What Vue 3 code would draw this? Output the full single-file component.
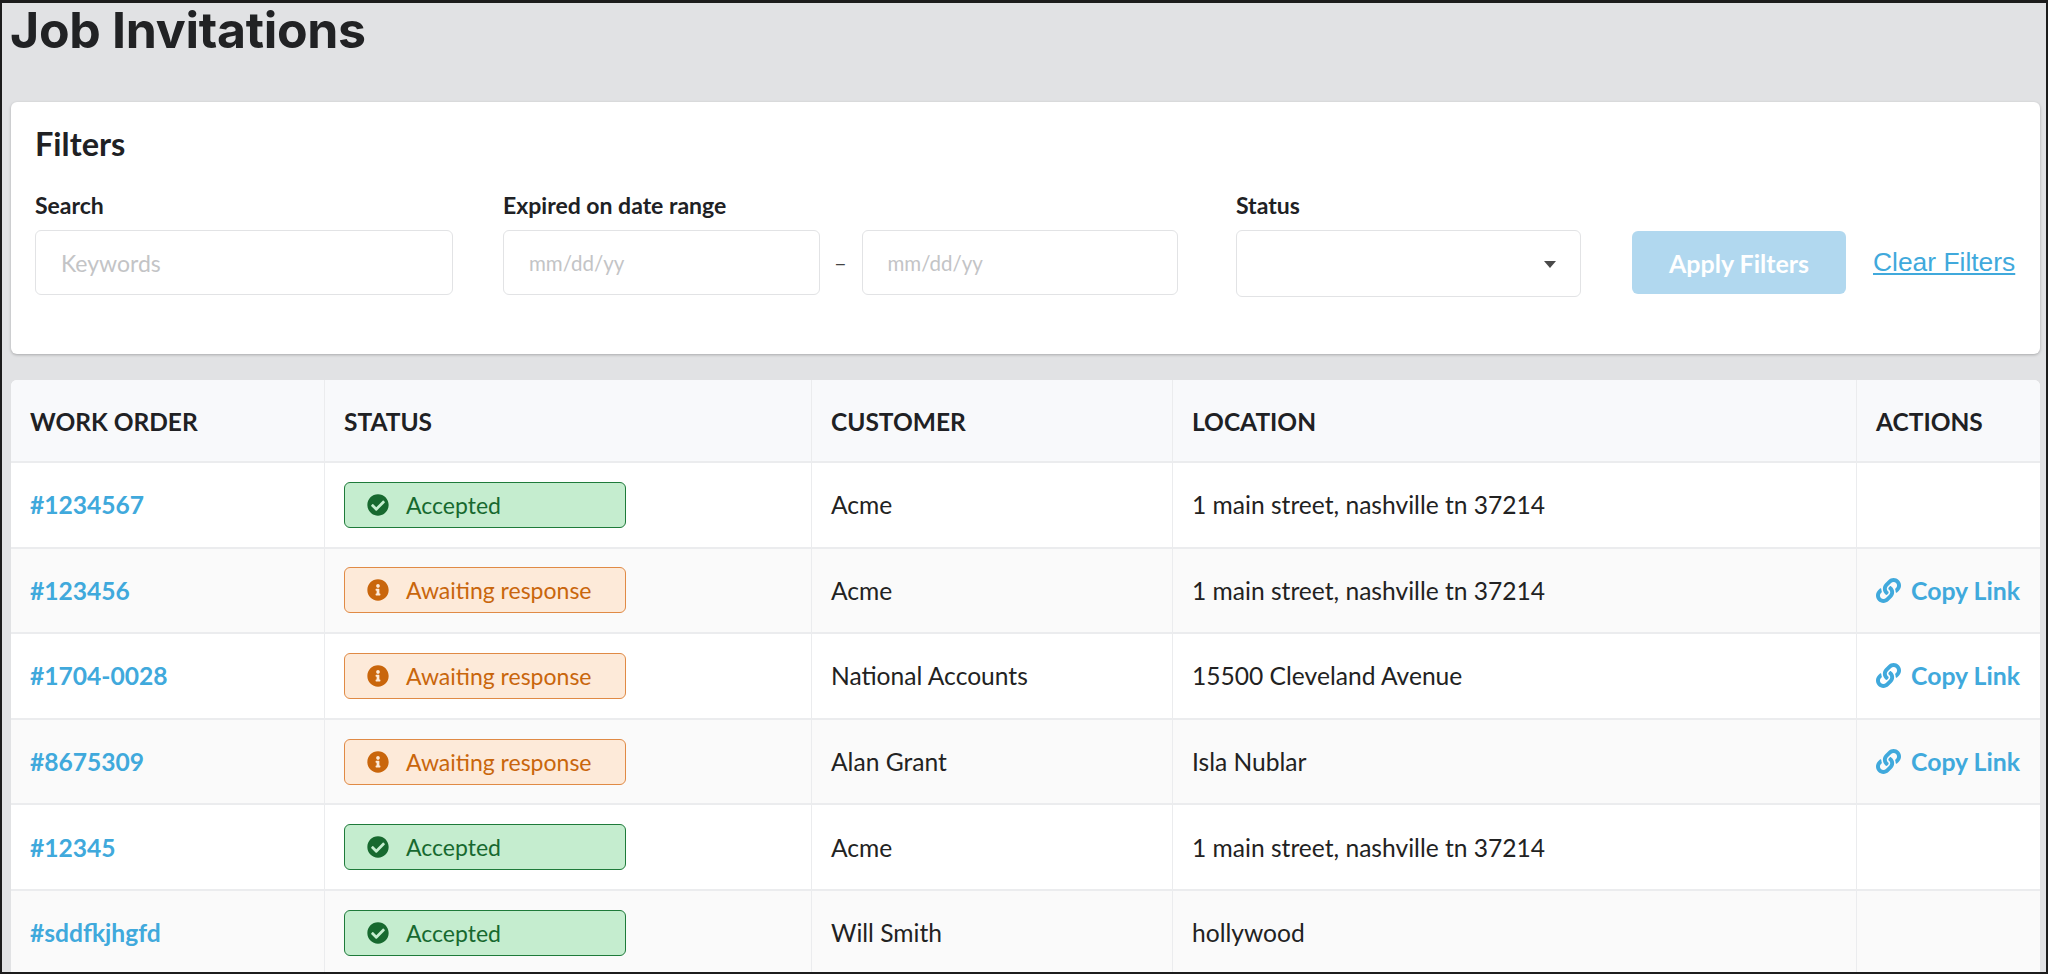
<script setup>
const check = 'M504 256c0 136.967-111.033 248-248 248S8 392.967 8 256 119.033 8 256 8s248 111.033 248 248zM227.314 387.314l184-184c6.248-6.248 6.248-16.379 0-22.627l-22.627-22.627c-6.248-6.249-16.379-6.249-22.628 0L216 308.118l-70.059-70.059c-6.248-6.248-16.379-6.248-22.628 0l-22.627 22.627c-6.248 6.248-6.248 16.379 0 22.627l104 104c6.249 6.249 16.379 6.249 22.628.001z'
const info = 'M256 8C119.043 8 8 119.083 8 256c0 136.997 111.043 248 248 248s248-111.003 248-248C504 119.083 392.957 8 256 8zm0 110c23.196 0 42 18.804 42 42s-18.804 42-42 42-42-18.804-42-42 18.804-42 42-42zm56 254c0 6.627-5.373 12-12 12h-88c-6.627 0-12-5.373-12-12v-24c0-6.627 5.373-12 12-12h12v-64h-12c-6.627 0-12-5.373-12-12v-24c0-6.627 5.373-12 12-12h64c6.627 0 12 5.373 12 12v100h12c6.627 0 12 5.373 12 12v24z'
const link = 'M326.612 185.391c59.747 59.809 58.927 155.698.36 214.59-.11.12-.24.25-.36.37l-67.2 67.2c-59.27 59.27-155.699 59.262-214.96 0-59.27-59.26-59.27-155.7 0-214.96l37.106-37.106c9.84-9.84 26.786-3.3 27.294 10.606.648 17.722 3.826 35.527 9.69 52.721 1.986 5.822.567 12.262-3.783 16.612l-13.087 13.087c-28.026 28.026-28.905 73.66-1.155 101.96 28.024 28.579 74.086 28.749 102.325.51l67.2-67.19c28.191-28.191 28.073-73.757 0-101.83-3.701-3.694-7.429-6.564-10.341-8.569a16.037 16.037 0 0 1-6.947-12.606c-.396-10.567 3.348-21.456 11.698-29.806l21.054-21.055c5.521-5.521 14.182-6.199 20.584-1.731a152.482 152.482 0 0 1 20.522 17.197zM467.547 44.449c-59.261-59.262-155.69-59.27-214.96 0l-67.2 67.2c-.12.12-.25.25-.36.37-58.566 58.892-59.387 154.781.36 214.59a152.454 152.454 0 0 0 20.521 17.196c6.402 4.468 15.064 3.789 20.584-1.731l21.054-21.055c8.35-8.35 12.094-19.239 11.698-29.806a16.037 16.037 0 0 0-6.947-12.606c-2.912-2.005-6.64-4.875-10.341-8.569-28.073-28.073-28.191-73.639 0-101.83l67.2-67.19c28.239-28.239 74.3-28.069 102.325.51 27.75 28.3 26.872 73.934-1.155 101.96l-13.087 13.087c-4.35 4.35-5.769 10.79-3.783 16.612 5.864 17.194 9.042 34.999 9.69 52.721.509 13.906 17.454 20.446 27.294 10.606l37.106-37.106c59.271-59.259 59.271-155.699.001-214.959z'

const rows = [
  { id: '#1234567', accepted: true, customer: 'Acme', location: '1 main street, nashville tn 37214' },
  { id: '#123456', accepted: false, customer: 'Acme', location: '1 main street, nashville tn 37214' },
  { id: '#1704-0028', accepted: false, customer: 'National Accounts', location: '15500 Cleveland Avenue' },
  { id: '#8675309', accepted: false, customer: 'Alan Grant', location: 'Isla Nublar' },
  { id: '#12345', accepted: true, customer: 'Acme', location: '1 main street, nashville tn 37214' },
  { id: '#sddfkjhgfd', accepted: true, customer: 'Will Smith', location: 'hollywood' }
]
</script>

<template>
  <div class="frame">
    <h1 class="title">Job Invitations</h1>

    <section class="card">
      <h2 class="card-title">Filters</h2>
      <div class="filters">
        <div class="field search">
          <label class="label">Search</label>
          <input class="input keywords" placeholder="Keywords" />
        </div>
        <div class="field range">
          <label class="label">Expired on date range</label>
          <div class="range-row">
            <input class="input date" placeholder="mm/dd/yy" />
            <span class="dash">–</span>
            <input class="input date" placeholder="mm/dd/yy" />
          </div>
        </div>
        <div class="field status">
          <label class="label">Status</label>
          <div class="select"><span class="caret"></span></div>
        </div>
        <button class="apply">Apply Filters</button>
        <a class="clear">Clear Filters</a>
      </div>
    </section>

    <table class="table">
      <colgroup>
        <col class="c1" /><col class="c2" /><col class="c3" /><col class="c4" /><col class="c5" />
      </colgroup>
      <thead>
        <tr>
          <th>WORK ORDER</th>
          <th>STATUS</th>
          <th>CUSTOMER</th>
          <th>LOCATION</th>
          <th>ACTIONS</th>
        </tr>
      </thead>
      <tbody>
        <tr v-for="row in rows" :key="row.id">
          <td><a class="order">{{ row.id }}</a></td>
          <td>
            <div class="badge" :class="row.accepted ? 'ok' : 'wait'">
              <svg class="badge-icon" viewBox="0 0 512 512"><path :d="row.accepted ? check : info" fill="currentColor" /></svg>
              <span>{{ row.accepted ? 'Accepted' : 'Awaiting response' }}</span>
            </div>
          </td>
          <td>{{ row.customer }}</td>
          <td>{{ row.location }}</td>
          <td>
            <a v-if="!row.accepted" class="copy">
              <svg class="copy-icon" viewBox="0 0 512 512"><path :d="link" fill="currentColor" /></svg>
              <span>Copy Link</span>
            </a>
          </td>
        </tr>
      </tbody>
    </table>
  </div>
</template>

<style>
html, body { margin: 0; overflow: hidden; }
</style>

<style scoped>
.frame {
  box-sizing: border-box;
  width: 2048px;
  height: 974px;
  overflow: hidden;
  background: #e1e2e4;
  border: 2px solid #1c1c1c;
  border-top-width: 3px;
  padding: 0 6px 0 9px;
  font-family: Lato, sans-serif;
  color: #202124;
}
.title {
  margin: 0 0 0 -1px;
  height: 99px;
  font: 700 50px/54px Inter, sans-serif;
  letter-spacing: -0.3px;
  color: #212224;
}
.card {
  box-sizing: border-box;
  height: 252px;
  background: #fff;
  border-radius: 6px;
  box-shadow: 0 1px 3px rgba(0, 0, 0, 0.25);
  padding: 24px 24px 0;
}
.card-title {
  margin: 0;
  font: 700 32.5px/36px Lato, sans-serif;
  color: #202124;
}
.filters {
  display: flex;
  align-items: flex-start;
  margin-top: 30px;
}
.field { display: flex; flex-direction: column; }
.label {
  font: 700 23px/26px Lato, sans-serif;
  margin-bottom: 12px;
}
.search { width: 418px; margin-right: 50px; }
.range { width: 675px; margin-right: 58px; }
.status { width: 345px; margin-right: 50px; }
.range-row { display: flex; align-items: center; }
.range-row .input { width: 316.5px; }
.dash { width: 42px; text-align: center; font-size: 22px; color: #444; }
.input {
  box-sizing: border-box;
  width: 100%;
  height: 65px;
  padding: 0 25px;
  border: 1px solid #e2e3e5;
  border-radius: 6px;
  background: #fff;
  outline: none;
}
.keywords { font: 400 23px Lato, sans-serif; }
.date { font: 400 20.5px Lato, sans-serif; }
.input::placeholder { color: #c3c4c6; opacity: 1; }
.select {
  box-sizing: border-box;
  position: relative;
  height: 67px;
  border: 1px solid #e2e3e5;
  border-radius: 6px;
  background: #fff;
}
.caret {
  position: absolute;
  right: 24px;
  top: 30px;
  width: 0;
  height: 0;
  border-left: 6px solid transparent;
  border-right: 6px solid transparent;
  border-top: 7px solid #4a4a4a;
}
.apply {
  width: 214px;
  height: 63px;
  margin: 39px 0 0 1px;
  padding: 0;
  border: 0;
  border-radius: 6px;
  background: #b1d8ef;
  color: #fff;
  font: 700 25px Lato, sans-serif;
}
.clear {
  margin: 55px 0 0 27px;
  color: #40a9dc;
  font: 400 26.4px/30px "Liberation Sans", sans-serif;
  text-decoration: underline;
  white-space: nowrap;
}
.table {
  width: 2029px;
  margin-top: 26px;
  border-collapse: separate;
  border-spacing: 0;
  table-layout: fixed;
  background: #fff;
  font-size: 24.6px;
  border-radius: 6px 6px 0 0;
}
.c1 { width: 313px; }
.c2 { width: 487px; }
.c3 { width: 361px; }
.c4 { width: 684px; }
.c5 { width: 184px; }
th, td {
  box-sizing: border-box;
  padding: 0 0 0 19px;
  text-align: left;
  white-space: nowrap;
  border-left: 1px solid #ebecee;
  border-bottom: 2px solid #ebecee;
}
th:first-child, td:first-child { border-left: 0; }
th {
  height: 83px;
  padding-top: 2px;
  background: #f8f9fb;
  font: 700 24.5px Lato, sans-serif;
  color: #202124;
}
th:first-child { border-top-left-radius: 6px; }
th:last-child { border-top-right-radius: 6px; }
td { height: 85.6px; color: #222; font-weight: 400; }
tbody tr:nth-child(even) td { background: #fafafa; }
.order { color: #40a9dc; font-weight: 700; }
.badge {
  box-sizing: border-box;
  display: flex;
  align-items: center;
  width: 282px;
  height: 46px;
  padding-left: 22px;
  border: 1px solid;
  border-radius: 6px;
  font-size: 23px;
}
.badge-icon { width: 22px; height: 22px; margin-right: 17px; }
.ok { background: #c5edcf; border-color: #1e7a3a; color: #17692f; }
.wait { background: #fdead9; border-color: #e08a45; color: #c9660c; }
.copy {
  display: flex;
  align-items: center;
  color: #40a9dc;
  font-weight: 700;
  font-size: 24.8px;
}
.copy-icon { width: 25px; height: 25px; margin-right: 10px; }
</style>
